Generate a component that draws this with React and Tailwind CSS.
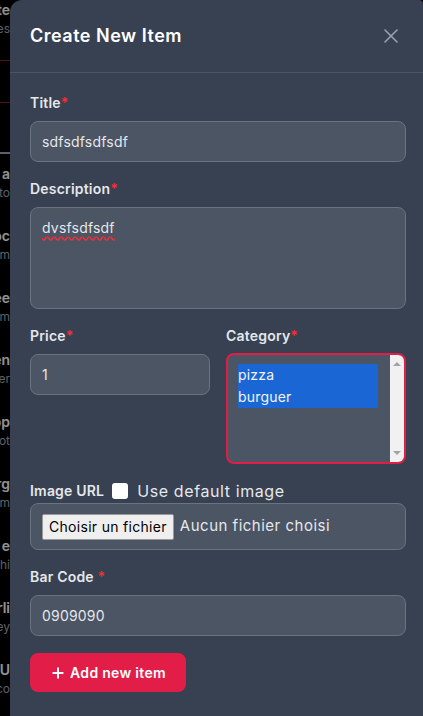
import { X, Plus } from "lucide-react";

const font = { fontFamily: "Inter, 'Noto Sans', sans-serif" };

// faded page that shows behind the modal on the left edge
const behind = [
  ["a", "to"],
  ["oc", "m"],
  ["ee", "m"],
  ["en", "er"],
  ["pp", "ot"],
  ["rg", "m"],
  ["e", "hi"],
  ["rli", "ey"],
  ["e U", "co"],
  ["cl", "e i"],
];

function Label({ children, star = true, space = false }) {
  return (
    <div className="text-sm font-semibold text-gray-200 leading-5 mb-2 tracking-[0.2px]">
      {children}
      {star && <span className="text-red-500">{space ? " *" : "*"}</span>}
    </div>
  );
}

function Field({ value }) {
  return (
    <div className="h-[41px] rounded-lg border border-[#6b7280] bg-[#4b5563] px-[11px] flex items-center text-sm text-gray-200 tracking-[0.2px]">
      {value}
    </div>
  );
}

export default function App() {
  return (
    <div className="w-[423px] h-[716px] bg-black flex overflow-hidden" style={font}>
      {/* BACKDROP STRIP */}
      <div className="w-[10px] shrink-0 overflow-hidden opacity-60">
        <div className="flex justify-end h-[18px] text-sm font-semibold text-gray-100 whitespace-nowrap">te</div>
        <div className="flex justify-end h-[22px] pt-[3px] text-xs text-gray-400 whitespace-nowrap">es</div>
        <div className="h-[20px]" />
        <div className="h-px bg-[#8a1c2c]" />
        <div className="h-[41px]" />
        <div className="h-px bg-[#8a1c2c]" />
        <div className="h-[49px]" />
        <div className="h-[2px] bg-gray-400" />
        <div className="flex flex-col gap-[25px] pt-[10px]">
          {behind.map(([a, b], i) => (
            <div key={i} className="flex flex-col gap-[1px]">
              <div className="flex justify-end text-sm font-semibold text-gray-100 whitespace-nowrap leading-5">{a}</div>
              <div className="flex justify-end text-xs text-gray-400 whitespace-nowrap leading-4">{b}</div>
            </div>
          ))}
        </div>
      </div>

      {/* MODAL */}
      <div className="flex-1 bg-[#374151] rounded-tl-xl rounded-tr-sm">
        <div className="h-[73px] border-b border-[#4b5563] flex items-center justify-between pl-5 pr-[26px]">
          <h2 className="text-lg font-semibold text-white tracking-[0.5px]">Create New Item</h2>
          <X size={24} strokeWidth={1.6} className="text-gray-400 -mr-[6px]" />
        </div>

        <div className="pl-5 pr-[17px] pt-5 flex flex-col gap-4">
          <div>
            <Label>Title</Label>
            <Field value="sdfsdfsdfsdf" />
          </div>

          <div className="mt-px">
            <Label>Description</Label>
            <div className="h-[102px] rounded-lg border border-[#6b7280] bg-[#4b5563] px-[11px] pt-[10px] text-sm text-gray-200 tracking-[0.2px]">
              <span className="underline decoration-wavy decoration-red-500 underline-offset-[3px]">dvsfsdfsdf</span>
            </div>
          </div>

          <div className="grid grid-cols-2 gap-4 mt-px">
            <div>
              <Label>Price</Label>
              <Field value="1" />
            </div>
            <div>
              <Label>Category</Label>
              <div className="h-[111px] -mt-px rounded-lg border-2 border-[#e11d48] bg-[#4b5563] flex overflow-hidden">
                <div className="flex-1 pl-[10px] pr-[12px] pt-[9px]">
                  <div className="bg-[#1a66d4] text-sm text-gray-100 leading-[22px] tracking-[0.2px]">
                    <div>pizza</div>
                    <div>burguer</div>
                  </div>
                </div>
                <div className="w-[14px] bg-[#f1f1f1] flex flex-col items-center justify-between py-[7px]">
                  <div className="w-0 h-0 border-l-[4px] border-r-[4px] border-b-[4px] border-l-transparent border-r-transparent border-b-[#a3a3a3]" />
                  <div className="w-0 h-0 border-l-[4px] border-r-[4px] border-t-[4px] border-l-transparent border-r-transparent border-t-[#a3a3a3]" />
                </div>
              </div>
            </div>
          </div>

          <div className="-mt-px">
            <div className="h-[24px] flex items-center">
              <span className="text-sm font-semibold text-gray-200 tracking-[0.2px]">Image URL</span>
              <span className="ml-2 w-4 h-4 rounded-[3px] bg-white" />
              <span className="ml-[9px] text-base text-gray-200 tracking-[0.6px]">Use default image</span>
            </div>
            <div className="h-[47px] rounded-lg border border-[#6b7280] bg-[#4b5563] px-[11px] flex items-center text-[15px]">
              <span className="h-[26px] px-[6px] flex items-center bg-[#efefef] border border-[#9a9a9a] rounded-[2px] text-black text-[14px] tracking-[0.3px]">
                Choisir un fichier
              </span>
              <span className="ml-[6px] text-gray-200 tracking-[0.5px]">Aucun fichier choisi</span>
            </div>
          </div>

          <div className="mt-px">
            <Label space>Bar Code</Label>
            <Field value="0909090" />
          </div>

          <div className="pt-px">
            <button className="h-[39px] w-[156px] rounded-lg bg-[#e11d48] text-white text-sm font-semibold flex items-center justify-center gap-1 tracking-[0.3px]">
              <Plus size={16} strokeWidth={3} />
              Add new item
            </button>
          </div>
        </div>
      </div>
    </div>
  );
}
